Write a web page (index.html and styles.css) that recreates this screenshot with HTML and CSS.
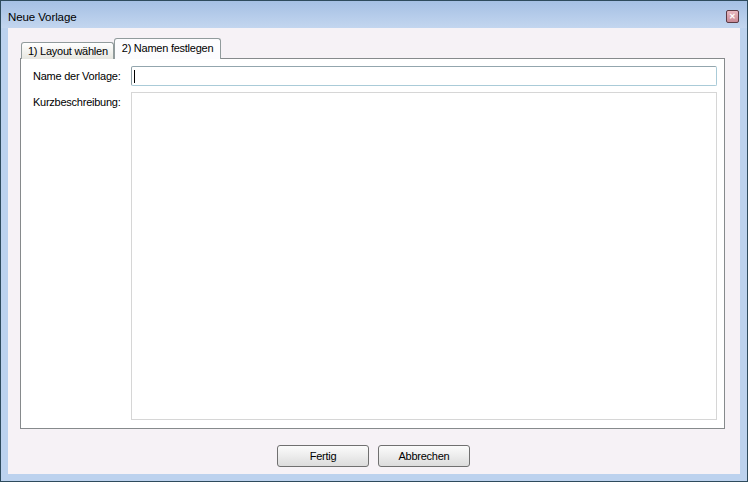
FILE: index.html
```html
<!DOCTYPE html>
<html lang="de">
<head>
<meta charset="utf-8">
<title>Neue Vorlage</title>
<link rel="stylesheet" href="styles.css">
</head>
<body>
<div class="window">
  <div class="titlebar">
    <span class="title">Neue Vorlage</span>
    <span class="close">&#x2715;</span>
  </div>
  <div class="client">
    <div class="tabs">
      <div class="tab">1) Layout wählen</div>
      <div class="tab active">2) Namen festlegen</div>
    </div>
    <div class="panel">
      <label class="label">Name der Vorlage:</label>
      <div class="input"><span class="caret"></span></div>
      <label class="label">Kurzbeschreibung:</label>
      <div class="textarea"></div>
    </div>
    <div class="buttons">
      <button class="btn">Fertig</button>
      <button class="btn">Abbrechen</button>
    </div>
  </div>
</div>
</body>
</html>
```

FILE: styles.css
```css
html, body {
  margin: 0;
  padding: 0;
}
body {
  font-family: "Liberation Sans", Arial, sans-serif;
  font-size: 11px;
  letter-spacing: -0.25px;
  color: #000;
}
.window {
  width: 748px;
  height: 482px;
  box-sizing: border-box;
  border: 1px solid #2e4b5d;
  background: #bcd2ee;
  display: flex;
  flex-direction: column;
}
.titlebar {
  height: 27px;
  flex: none;
  display: flex;
  align-items: center;
  justify-content: space-between;
  padding: 0 8px 0 7px;
  background: linear-gradient(#a5c0e4, #c3d6ef);
}
.title {
  font-size: 11.5px;
  letter-spacing: -0.1px;
  padding-top: 4px;
  color: #000;
}
.close {
  width: 11px;
  height: 11px;
  border: 1px solid #5c3a44;
  border-radius: 2px;
  background: linear-gradient(#e8b8c0, #c98a96);
  color: #fff;
  font-size: 8px;
  line-height: 11px;
  text-align: center;
  font-weight: bold;
  margin-top: 4px;
  letter-spacing: 0;
}
.client {
  flex: 1;
  margin: 0 7px 7px 7px;
  background: #f6f2f6;
  border: 1px solid #f6f2f6;
  box-sizing: border-box;
  display: flex;
  flex-direction: column;
  padding: 9px 14px 0 11px;
}
.tabs {
  display: flex;
  align-items: flex-end;
  height: 21px;
  padding-left: 1px;
  margin-bottom: -1px;
  position: relative;
  z-index: 1;
}
.tab {
  height: 17px;
  box-sizing: border-box;
  padding: 2px 5px 0 6px;
  border: 1px solid #919b9c;
  border-bottom: none;
  border-radius: 3px 3px 0 0;
  background: linear-gradient(#ffffff, #e6e6e0);
  white-space: nowrap;
}
.tab.active {
  height: 21px;
  padding: 3px 7px 0 7px;
  background: #fcfcfe;
  border-color: #919b9c;
}
.panel {
  height: 371px;
  box-sizing: border-box;
  border: 1px solid #868a8c;
  background: #fff;
  display: grid;
  grid-template-columns: 98px 1fr;
  grid-template-rows: 20px 328px;
  row-gap: 6px;
  padding: 7px 7px 8px 12px;
}
.label {
  padding-top: 4px;
  white-space: nowrap;
}
.input {
  border: 1px solid #aacbd8;
  border-left-color: #8d9da4;
  border-top-color: #93a6ae;
  border-radius: 2px;
  background: #fff;
  display: flex;
  align-items: center;
  padding-left: 2px;
}
.caret {
  width: 1px;
  height: 13px;
  background: #000;
}
.textarea {
  border: 1px solid #d6d6d6;
  background: #fff;
}
.buttons {
  display: flex;
  justify-content: center;
  gap: 9px;
  padding: 16px 0 0 2px;
}
.btn {
  width: 92px;
  height: 22px;
  margin: 0;
  border: 1px solid #707070;
  border-radius: 3px;
  background: linear-gradient(#fbfbfb 0%, #ececec 50%, #dcdcdc 100%);
  font-family: "Liberation Sans", Arial, sans-serif;
  font-size: 11px;
  letter-spacing: -0.25px;
  color: #000;
  padding: 0;
}
```
